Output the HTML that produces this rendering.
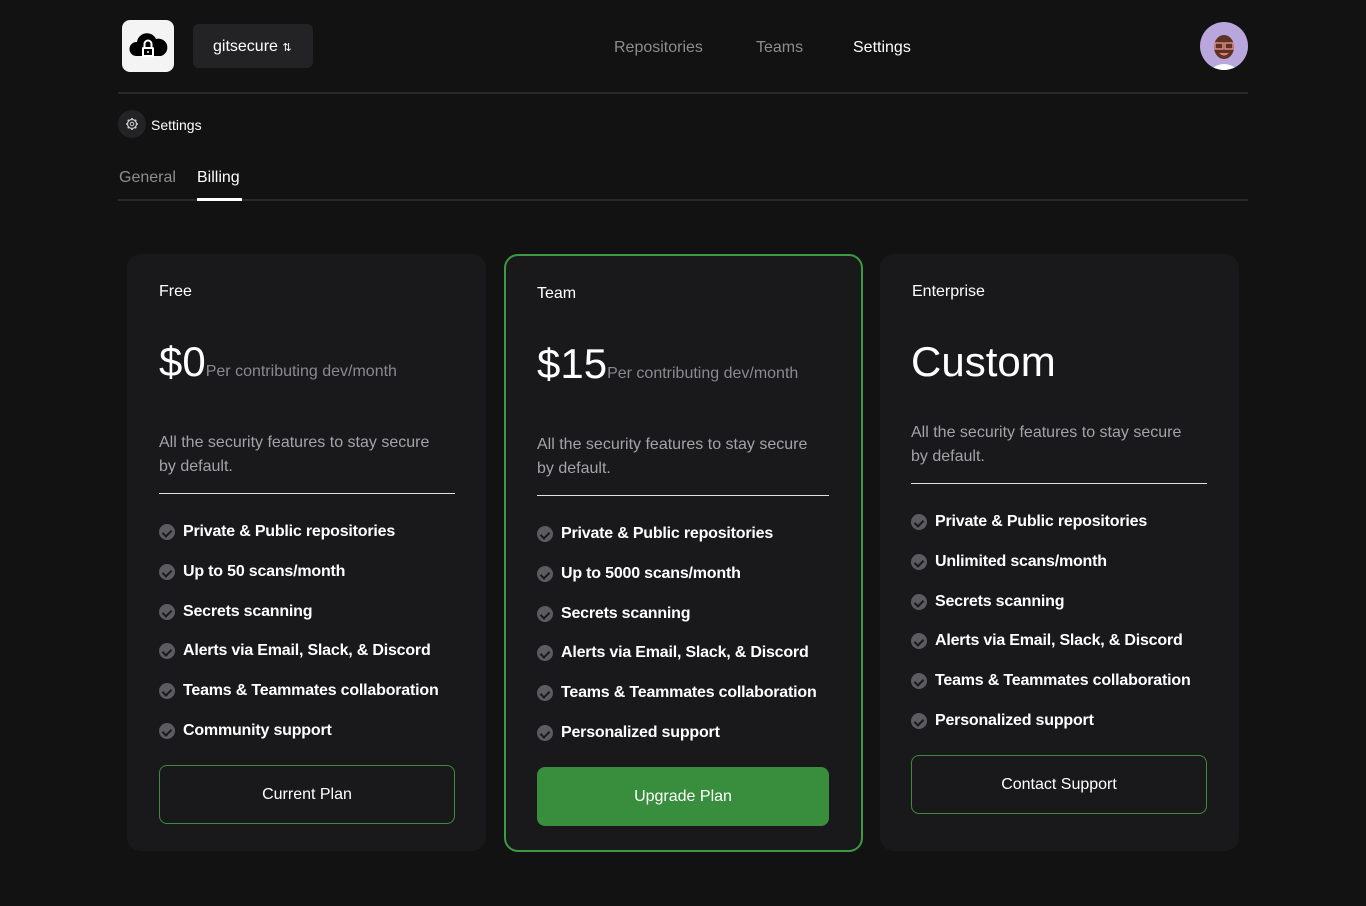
<!DOCTYPE html>
<html><head><meta charset="utf-8"><style>
*{margin:0;padding:0;box-sizing:border-box}
body{width:1366px;height:906px;background:#121212;font-family:"Liberation Sans",sans-serif;color:#fff;position:relative;overflow:hidden}
.a{position:absolute}
.nav{font-size:16px;color:#8d8d8d;top:39px}
.card{position:absolute;top:254px;width:359px;height:597px;background:#19191b;border-radius:14px}
.card.t{border:2px solid #3d9a42;top:254px;height:598px;width:359px}
.ttl{position:absolute;left:32px;font-size:16px}
.price{position:absolute;left:32px;font-size:42px;line-height:1}
.price span{font-size:16px;color:#8a8a8e}
.desc{position:absolute;left:32px;width:285px;font-size:16px;line-height:24px;color:#a4a4a8}
.hr{position:absolute;left:32px;width:296px;height:1px;background:#e0e0e0}
.f{position:absolute;left:32px;font-size:16px;font-weight:bold;display:flex;align-items:center;gap:8px;white-space:nowrap;letter-spacing:-0.2px}
.f i{width:16px;height:16px;border-radius:50%;background:#5c5c60;display:inline-block;position:relative}
.f i:after{content:"";position:absolute;left:5px;top:3.5px;width:4px;height:7px;border:solid #1a1a1c;border-width:0 2px 2px 0;transform:rotate(45deg)}
.btn{position:absolute;left:32px;width:296px;height:59px;border-radius:8px;display:flex;align-items:center;justify-content:center;font-size:16px}
.t .ttl,.t .price,.t .desc,.t .hr,.t .f,.t .btn{left:31px}
.t .hr,.t .btn{width:292px}
.o{border:1px solid #3a8c3e}
.g{background:#388e3c}
</style></head><body>
<div class="a" style="left:122px;top:20px;width:52px;height:52px;background:#f4f4f4;border-radius:8px">
<svg width="52" height="52" viewBox="0 0 52 52"><path d="M14 36 a7 7 0 0 1 1-14 a10 10 0 0 1 19-3 a8 8 0 0 1 5 17z" fill="#000"/><rect x="20" y="27" width="12" height="10" rx="1.5" fill="#fff"/><path d="M22.5 27v-3a3.5 3.5 0 0 1 7 0v3" fill="none" stroke="#fff" stroke-width="2"/><rect x="22" y="29" width="8" height="6" fill="#000"/><circle cx="26" cy="32" r="1" fill="#fff"/></svg></div>
<div class="a" style="left:193px;top:24px;width:120px;height:44px;background:#232325;border-radius:6px;font-size:16px;padding:14px 0 0 20px">gitsecure <span style="font-size:11px">&#8645;</span></div>
<div class="a nav" style="left:614px">Repositories</div>
<div class="a nav" style="left:756px">Teams</div>
<div class="a nav" style="left:853px;color:#fff">Settings</div>
<div class="a" style="left:1200px;top:22px;width:48px;height:48px;border-radius:50%;background:#b9a6dc;overflow:hidden">
<svg width="48" height="48" viewBox="0 0 48 48"><path d="M10 48 q14-12 28 0z" fill="#fff"/><ellipse cx="24" cy="25" rx="10" ry="12" fill="#5a3322"/><rect x="15" y="21" width="8" height="6" fill="none" stroke="#d88" stroke-width="1.5"/><rect x="25" y="21" width="8" height="6" fill="none" stroke="#d88" stroke-width="1.5"/><path d="M19 31 q5 5 10 0z" fill="#e77"/></svg></div>
<div class="a" style="left:118px;top:92px;width:1130px;height:2px;background:#2a2a2c"></div>
<div class="a" style="left:118px;top:110px;width:28px;height:28px;border-radius:50%;background:#232325">
<svg width="28" height="28" viewBox="0 0 28 28"><circle cx="14" cy="14" r="4.5" fill="none" stroke="#ccc" stroke-width="1.2"/><circle cx="14" cy="14" r="1.8" fill="none" stroke="#ccc" stroke-width="1"/><g stroke="#ccc" stroke-width="1.6"><path d="M14 8v2M14 18v2M8 14h2M18 14h2M9.8 9.8l1.4 1.4M16.8 16.8l1.4 1.4M9.8 18.2l1.4-1.4M16.8 11.2l1.4-1.4"/></g></svg></div>
<div class="a" style="left:151px;top:117px;font-size:14px">Settings</div>
<div class="a" style="left:119px;top:169px;font-size:16px;color:#8d8d8d">General</div>
<div class="a" style="left:197px;top:169px;font-size:16px">Billing</div>
<div class="a" style="left:118px;top:199px;width:1130px;height:2px;background:#2a2a2c"></div>
<div class="a" style="left:197px;top:198px;width:45px;height:3px;background:#fff"></div>

<div class="card" style="left:127px">
<div class="ttl" style="top:29px">Free</div>
<div class="price" style="top:87px">$0<span>Per contributing dev/month</span></div>
<div class="desc" style="top:177px">All the security features to stay secure by default.</div>
<div class="hr" style="top:239px"></div>
<div class="f" style="top:269px"><i></i>Private &amp; Public repositories</div>
<div class="f" style="top:309px"><i></i>Up to 50 scans/month</div>
<div class="f" style="top:349px"><i></i>Secrets scanning</div>
<div class="f" style="top:388px"><i></i>Alerts via Email, Slack, &amp; Discord</div>
<div class="f" style="top:428px"><i></i>Teams &amp; Teammates collaboration</div>
<div class="f" style="top:468px"><i></i>Community support</div>
<div class="btn o" style="top:511px">Current Plan</div>
</div>

<div class="card t" style="left:504px">
<div class="ttl" style="top:29px">Team</div>
<div class="price" style="top:87px">$15<span>Per contributing dev/month</span></div>
<div class="desc" style="top:177px">All the security features to stay secure by default.</div>
<div class="hr" style="top:239px"></div>
<div class="f" style="top:269px"><i></i>Private &amp; Public repositories</div>
<div class="f" style="top:309px"><i></i>Up to 5000 scans/month</div>
<div class="f" style="top:349px"><i></i>Secrets scanning</div>
<div class="f" style="top:388px"><i></i>Alerts via Email, Slack, &amp; Discord</div>
<div class="f" style="top:428px"><i></i>Teams &amp; Teammates collaboration</div>
<div class="f" style="top:468px"><i></i>Personalized support</div>
<div class="btn g" style="top:511px">Upgrade Plan</div>
</div>

<div class="card" style="left:880px">
<div class="ttl" style="top:29px">Enterprise</div>
<div class="price" style="top:87px;left:31px">Custom</div>
<div class="desc" style="top:167px;left:31px">All the security features to stay secure by default.</div>
<div class="hr" style="top:229px;left:31px"></div>
<div class="f" style="top:259px;left:31px"><i></i>Private &amp; Public repositories</div>
<div class="f" style="top:299px;left:31px"><i></i>Unlimited scans/month</div>
<div class="f" style="top:339px;left:31px"><i></i>Secrets scanning</div>
<div class="f" style="top:378px;left:31px"><i></i>Alerts via Email, Slack, &amp; Discord</div>
<div class="f" style="top:418px;left:31px"><i></i>Teams &amp; Teammates collaboration</div>
<div class="f" style="top:458px;left:31px"><i></i>Personalized support</div>
<div class="btn o" style="top:501px;left:31px">Contact Support</div>
</div>
</body></html>
